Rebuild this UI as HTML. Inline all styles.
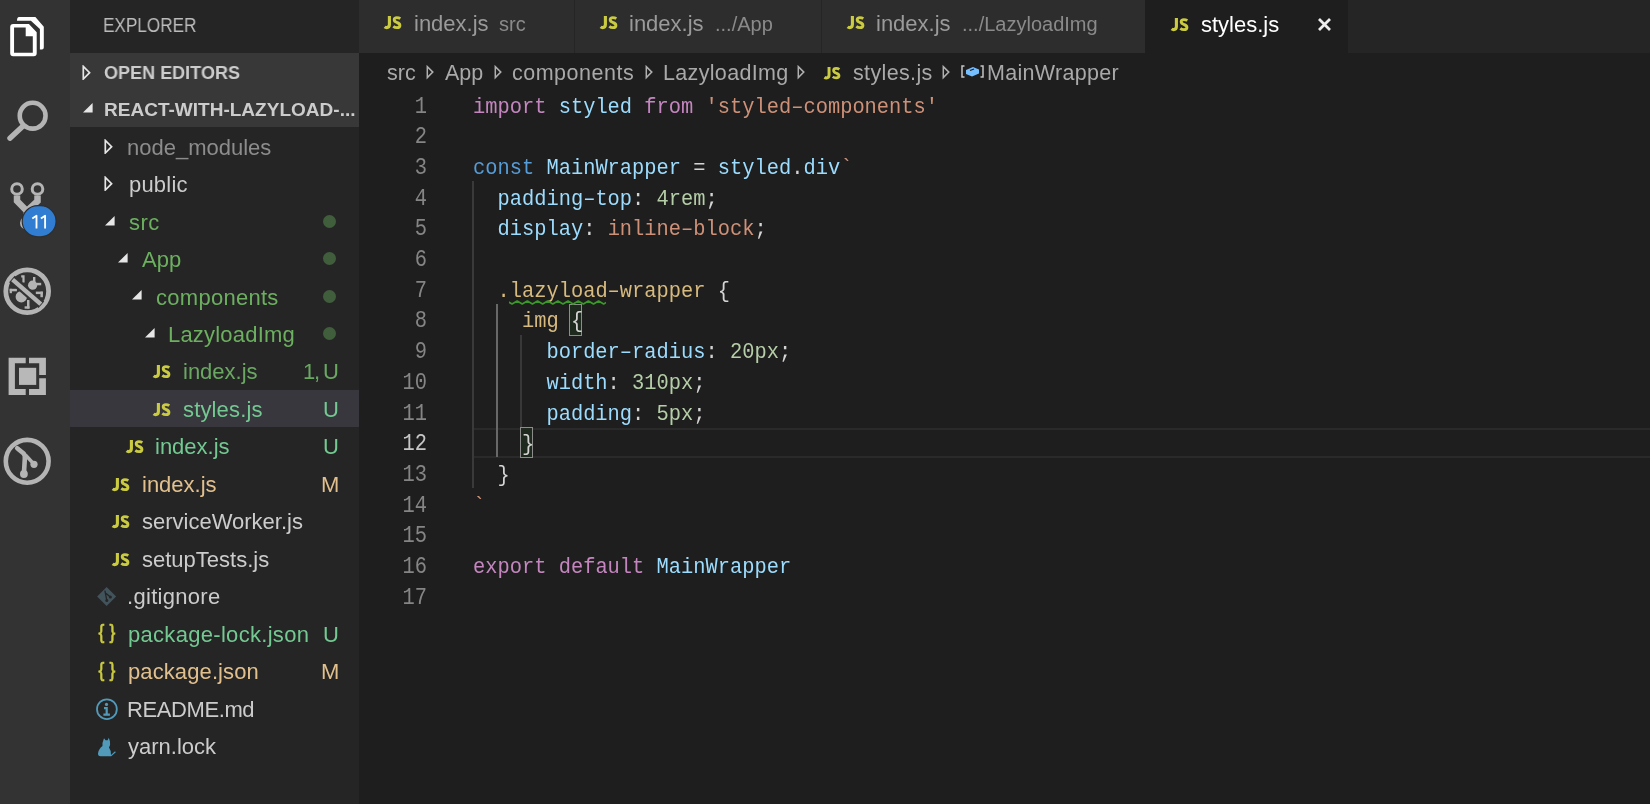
<!DOCTYPE html>
<html><head><meta charset="utf-8"><style>
*{margin:0;padding:0;box-sizing:border-box}
html,body{width:1650px;height:804px;overflow:hidden;background:#1e1e1e;font-family:"Liberation Sans",sans-serif}
.abs{position:absolute}
.t,.code,.ln,.js{will-change:transform}
.t{position:absolute;white-space:pre;line-height:1}
.lbl{font-size:22px;line-height:37.4px;height:37.4px}
.js{position:absolute;font-weight:bold;color:#cbcb41;white-space:pre;line-height:1}
.code{position:absolute;font-family:"Liberation Mono",monospace;font-size:20.4px;white-space:pre;line-height:30.6px;height:30.6px;color:#d4d4d4;transform:translateY(2.6px) scaleY(1.06);transform-origin:0 19.7px}
.ln{position:absolute;width:80px;text-align:right;font-family:"Liberation Mono",monospace;font-size:20.4px;line-height:30.6px;transform:translateY(2.6px) scaleY(1.13);transform-origin:0 19.7px}
.kw{color:#c586c0}.st{color:#9cdcfe}.str{color:#ce9178}.cst{color:#569cd6}.num{color:#b5cea8}.sel{color:#d7ba7d}
</style></head><body>
<svg width="0" height="0" style="position:absolute"><defs><g id="jsg" fill="none" stroke="#cbcb41" stroke-width="2.9"><path stroke-width="3.1" d="M5.4 0 L5.4 8.6 Q5.4 11.6 2.6 11.6 Q1.5 11.6 0.6 10.9"/><path d="M16.3 2.7 Q14.8 1.6 12.9 1.6 Q10.2 1.6 10.2 3.8 Q10.2 5.6 12.9 6.5 Q15.9 7.4 15.9 9.4 Q15.9 11.6 12.9 11.6 Q10.8 11.6 9.3 10.4"/></g></defs></svg>
<div class="abs" style="left:0;top:0;width:70px;height:804px;background:#333333"></div>
<div class="abs" style="left:70px;top:0;width:289px;height:804px;background:#252526"></div>
<div class="abs" style="left:359px;top:0;width:1291px;height:53px;background:#252526"></div>
<div class="abs" style="left:70px;top:53px;width:289px;height:74.4px;background:#383838"></div>
<div class="abs" style="left:70px;top:389.76px;width:289px;height:37.48px;background:#37373d"></div>
<svg class="abs" style="left:0;top:0" width="70" height="500" viewBox="0 0 70 500">
 <!-- explorer icon -->
 <path d="M17 17.1 L35.4 17.1 L43.8 26.8 L43.8 47.5 Q43.8 49.4 41.9 49.4 L39.9 49.4 L39.9 29.1 L30.9 20.7 L17 20.7 Q17 17.1 19 17.1 Z" fill="#ffffff"/>
 <path d="M10.2 26.9 Q10.2 23.9 13.2 23.9 L28.9 23.9 L36.7 32.3 L36.7 53.2 Q36.7 56.2 33.7 56.2 L13.2 56.2 Q10.2 56.2 10.2 53.2 Z" fill="#333333" stroke="#333333" stroke-width="3"/>
 <path fill-rule="evenodd" d="M10.2 26.9 Q10.2 23.9 13.2 23.9 L28.9 23.9 L36.7 32.3 L36.7 53.2 Q36.7 56.2 33.7 56.2 L13.2 56.2 Q10.2 56.2 10.2 53.2 Z M14.05 27.5 L25.7 27.5 L25.7 36.2 L32.8 36.2 L32.8 52.7 L14.05 52.7 Z" fill="#ffffff"/>
 <!-- search -->
 <g fill="none" stroke="#b4b4b4" stroke-width="4.6" stroke-linecap="round">
  <circle cx="32.65" cy="115.7" r="12.9"/>
  <path d="M9.9 138.3 L22.8 126.2" stroke-width="5.3"/>
 </g>
 <!-- scm -->
 <g fill="none" stroke="#b4b4b4">
  <circle cx="17" cy="189" r="5.3" stroke-width="3"/>
  <circle cx="37.5" cy="189" r="5.3" stroke-width="3"/>
  <circle cx="26.8" cy="223" r="5.3" stroke-width="3"/>
  <path d="M17 195.5 L17 201 L26.8 211 L37.5 201 L37.5 195.5 M26.8 211 L26.8 218" stroke-width="6.5" stroke-linejoin="miter"/>
 </g>
 <rect x="22.2" y="205.7" width="33.9" height="31.1" rx="15.55" fill="#307dd1" stroke="#2e2e2e" stroke-width="1.2"/>
 <path d="M32.3 218.6 L36.5 215.7 L36.5 228.5 M40.9 218.6 L45.1 215.7 L45.1 228.5" fill="none" stroke="#ffffff" stroke-width="1.85" stroke-linejoin="round"/>
 <!-- debug -->
 <g fill="#b4b4b4">
  <circle cx="27.2" cy="291.2" r="21.4" fill="none" stroke="#b4b4b4" stroke-width="4.8"/>
  <circle cx="32.6" cy="285.2" r="4.6"/>
  <path d="M21.2 275.2 L24.6 275.2 L24.6 282.5 L22.4 282.5 L22.4 277.4 L21.2 277.4 Z"/>
  <rect x="33" y="277" width="2.4" height="5"/>
  <rect x="35" y="282.8" width="6.2" height="2.5"/>
  <rect x="35.8" y="291.6" width="7" height="2.5"/>
  <rect x="40.4" y="291.6" width="2.5" height="5.6"/>
  <circle cx="21.3" cy="296.8" r="5.7"/>
  <rect x="9.7" y="288.8" width="7.2" height="2.5"/>
  <rect x="9.7" y="288.8" width="2.2" height="4.4"/>
  <rect x="27" y="300" width="2.5" height="8.5"/>
  <rect x="24.6" y="306.3" width="4.9" height="2.4"/>
  <path d="M11.9 279 L41.4 304.8" stroke="#333333" stroke-width="8.5"/>
  <path d="M12.6 279.6 L40.8 304.2" stroke="#b4b4b4" stroke-width="4.4"/>
 </g>
 <!-- extensions -->
 <g fill="#b8b8b8">
  <path d="M8.6 357.7 L25.7 357.7 L25.7 363.3 L14.9 363.3 L14.9 389 L25.7 389 L25.7 395 L8.6 395 Z"/>
  <path d="M29 357.7 L45.9 357.7 L45.9 375 L39.2 375 L39.2 363.3 L29 363.3 Z"/>
  <path d="M39.2 378.2 L45.9 378.2 L45.9 395 L29 395 L29 389 L39.2 389 Z"/>
  <rect x="19" y="367.8" width="17.2" height="17.1"/>
 </g>
 <!-- git graph -->
 <g fill="none" stroke="#b4b4b4">
  <circle cx="27.2" cy="461.3" r="21.4" stroke-width="4.6"/>
  <path d="M17.2 448.3 L23.3 453.2 Q25.3 455.2 24.8 459 L23.9 474" stroke-width="4.6" stroke-linecap="round"/>
  <path d="M25.5 455 L33.8 464" stroke-width="3.4"/>
 </g>
 <circle cx="23.9" cy="474" r="3.9" fill="#b4b4b4"/>
 <circle cx="34" cy="464.3" r="3.6" fill="#b4b4b4"/>
</svg>

<div class="t " style="left:103.39999999999999px;top:15.5px;font-size:19.3px;color:#bbbbbb;transform:scaleX(0.89);transform-origin:0 0">EXPLORER</div>
<svg class="abs" style="left:82px;top:65.3px" width="10" height="15" viewBox="0 0 10 15"><path d="M1.3 1.4 L1.3 14.0 L7.6 7.7 Z" fill="none" stroke="#e6e6e6" stroke-width="1.7"/></svg>
<div class="t " style="left:104.0px;top:63.5px;font-size:18.7px;font-weight:bold;color:#cccccc;transform:scaleX(0.965);transform-origin:0 0">OPEN EDITORS</div>
<svg class="abs" style="left:82.5px;top:103.2px" width="10" height="10" viewBox="0 0 10 10"><path d="M0 9.6 L9.6 9.6 L9.6 0 Z" fill="#e6e6e6"/></svg>
<div class="t " style="left:104.0px;top:100.6px;font-size:18.7px;font-weight:bold;color:#cccccc;transform:scaleX(1.018);transform-origin:0 0">REACT-WITH-LAZYLOAD-...</div>
<svg class="abs" style="left:104.35px;top:138.64000000000001px" width="10" height="15" viewBox="0 0 10 15"><path d="M1.3 1.4 L1.3 14.0 L7.6 7.7 Z" fill="none" stroke="#e6e6e6" stroke-width="1.7"/></svg>
<div class="t lbl" style="left:126.69999999999999px;top:128.6px;color:#8c8c8c;letter-spacing:0px">node_modules</div>
<svg class="abs" style="left:104.35px;top:176.12px" width="10" height="15" viewBox="0 0 10 15"><path d="M1.3 1.4 L1.3 14.0 L7.6 7.7 Z" fill="none" stroke="#e6e6e6" stroke-width="1.7"/></svg>
<div class="t lbl" style="left:128.6px;top:166.07999999999998px;color:#cccccc;letter-spacing:0.2px">public</div>
<svg class="abs" style="left:104.5px;top:215.50000000000003px" width="10" height="10" viewBox="0 0 10 10"><path d="M0 9.6 L9.6 9.6 L9.6 0 Z" fill="#e6e6e6"/></svg>
<div class="t lbl" style="left:128.6px;top:203.56px;color:#6cb05f;letter-spacing:0.4px">src</div>
<div class="abs" style="left:323px;top:214.60000000000002px;width:13px;height:13px;border-radius:50%;background:#405e3c"></div>
<svg class="abs" style="left:118.2px;top:252.98px" width="10" height="10" viewBox="0 0 10 10"><path d="M0 9.6 L9.6 9.6 L9.6 0 Z" fill="#e6e6e6"/></svg>
<div class="t lbl" style="left:142.2px;top:241.04px;color:#6cb05f;letter-spacing:0px">App</div>
<div class="abs" style="left:323px;top:252.07999999999998px;width:13px;height:13px;border-radius:50%;background:#405e3c"></div>
<svg class="abs" style="left:131.8px;top:290.46px" width="10" height="10" viewBox="0 0 10 10"><path d="M0 9.6 L9.6 9.6 L9.6 0 Z" fill="#e6e6e6"/></svg>
<div class="t lbl" style="left:155.8px;top:278.52px;color:#6cb05f;letter-spacing:0.28px">components</div>
<div class="abs" style="left:323px;top:289.56px;width:13px;height:13px;border-radius:50%;background:#405e3c"></div>
<svg class="abs" style="left:145.4px;top:327.93999999999994px" width="10" height="10" viewBox="0 0 10 10"><path d="M0 9.6 L9.6 9.6 L9.6 0 Z" fill="#e6e6e6"/></svg>
<div class="t lbl" style="left:168.20000000000002px;top:315.99999999999994px;color:#6cb05f;letter-spacing:0.2px">LazyloadImg</div>
<div class="abs" style="left:323px;top:327.03999999999996px;width:13px;height:13px;border-radius:50%;background:#405e3c"></div>
<svg class="abs" style="left:150.8px;top:363.11999999999995px" width="21.50" height="17.20" viewBox="-2 -2 21.5 17.2"><use href="#jsg"/></svg>
<div class="t lbl" style="left:182.5px;top:353.47999999999996px;color:#6aa862;letter-spacing:0px">index.js</div>
<div class="t lbl" style="right:1310.8px;top:353.47999999999996px;color:#6aa862;letter-spacing:0px;text-align:right">U</div>
<div class="t lbl" style="left:303.4px;top:353.47999999999996px;color:#6aa862;letter-spacing:0px">1</div>
<div class="t lbl" style="left:314.0px;top:353.47999999999996px;color:#6aa862;letter-spacing:0px">,</div>
<svg class="abs" style="left:150.8px;top:400.59999999999997px" width="21.50" height="17.20" viewBox="-2 -2 21.5 17.2"><use href="#jsg"/></svg>
<div class="t lbl" style="left:182.5px;top:390.96px;color:#73c991;letter-spacing:0.15px">styles.js</div>
<div class="t lbl" style="right:1310.8px;top:390.96px;color:#73c991;letter-spacing:0px;text-align:right">U</div>
<svg class="abs" style="left:123.8px;top:438.08px" width="21.50" height="17.20" viewBox="-2 -2 21.5 17.2"><use href="#jsg"/></svg>
<div class="t lbl" style="left:155.10000000000002px;top:428.44px;color:#73c991;letter-spacing:0px">index.js</div>
<div class="t lbl" style="right:1310.8px;top:428.44px;color:#73c991;letter-spacing:0px;text-align:right">U</div>
<svg class="abs" style="left:110.3px;top:475.56px" width="21.50" height="17.20" viewBox="-2 -2 21.5 17.2"><use href="#jsg"/></svg>
<div class="t lbl" style="left:141.7px;top:465.92px;color:#e2c08d;letter-spacing:0px">index.js</div>
<div class="t lbl" style="right:1310.8px;top:465.92px;color:#e2c08d;letter-spacing:0px;text-align:right">M</div>
<svg class="abs" style="left:110.3px;top:513.04px" width="21.50" height="17.20" viewBox="-2 -2 21.5 17.2"><use href="#jsg"/></svg>
<div class="t lbl" style="left:142.2px;top:503.3999999999999px;color:#cccccc;letter-spacing:0px">serviceWorker.js</div>
<svg class="abs" style="left:110.3px;top:550.52px" width="21.50" height="17.20" viewBox="-2 -2 21.5 17.2"><use href="#jsg"/></svg>
<div class="t lbl" style="left:142.2px;top:540.88px;color:#cccccc;letter-spacing:0px">setupTests.js</div>
<div class="t lbl" style="left:127.0px;top:578.36px;color:#cccccc;letter-spacing:0.3px">.gitignore</div>
<div class="t lbl" style="left:128.4px;top:615.84px;color:#73c991;letter-spacing:0.3px">package-lock.json</div>
<div class="t lbl" style="right:1310.8px;top:615.84px;color:#73c991;letter-spacing:0px;text-align:right">U</div>
<div class="t lbl" style="left:128.4px;top:653.3199999999999px;color:#e2c08d;letter-spacing:0.1px">package.json</div>
<div class="t lbl" style="right:1310.8px;top:653.3199999999999px;color:#e2c08d;letter-spacing:0px;text-align:right">M</div>
<div class="t lbl" style="left:127.2px;top:690.8px;color:#cccccc;letter-spacing:-0.4px">README.md</div>
<div class="t lbl" style="left:128.4px;top:728.28px;color:#cccccc;letter-spacing:0px">yarn.lock</div>
<svg class="abs" style="left:90px;top:580px" width="40" height="190" viewBox="90 580 40 190">
 <path d="M106.6 587.1 L116.1 596.6 L106.6 606.1 L97.1 596.6 Z" fill="#41535b"/>
 <path d="M104.9 590.6 L106.8 600.4 M105.9 593.2 L110.3 597" stroke="#252526" stroke-width="1.3" fill="none"/>
 <circle cx="106.8" cy="600.5" r="1.5" fill="#252526"/>
 <circle cx="110.4" cy="597" r="1.5" fill="#252526"/>
 <text x="98.2" y="639.5" font-family="Liberation Sans" font-size="20.5" fill="#cbcb41" stroke="#cbcb41" stroke-width="0.7" transform="translate(98.2 0) scale(0.85 1) translate(-97.8 0)">{</text>
 <text x="109.6" y="639.5" font-family="Liberation Sans" font-size="20.5" fill="#cbcb41" stroke="#cbcb41" stroke-width="0.7" transform="translate(109.6 0) scale(0.85 1) translate(-109.6 0)">}</text>
 <text x="98.2" y="676.9" font-family="Liberation Sans" font-size="20.5" fill="#cbcb41" stroke="#cbcb41" stroke-width="0.7" transform="translate(98.2 0) scale(0.85 1) translate(-97.8 0)">{</text>
 <text x="109.6" y="676.9" font-family="Liberation Sans" font-size="20.5" fill="#cbcb41" stroke="#cbcb41" stroke-width="0.7" transform="translate(109.6 0) scale(0.85 1) translate(-109.6 0)">}</text>
 <circle cx="106.9" cy="709.2" r="9.9" fill="none" stroke="#519aba" stroke-width="1.8"/>
 <circle cx="106.5" cy="704.4" r="1.6" fill="#519aba"/>
 <path d="M104 708.2 L106.7 708.2 L106.7 714.6 M103.4 714.6 L109.9 714.6" stroke="#519aba" stroke-width="2.2" fill="none"/>
 <path d="M104 738.3 L105.6 740.3 L107.6 740.2 L108.8 737.7 L110 741.5 Q110.6 745 109 747.5 Q111.5 751 111 755 L115 751.2 L115.8 752.2 L111.2 756.3 L100.5 756.3 Q97.8 756 98 753.5 Q98.5 749 102.5 746 Q102 743 104 738.3 Z" fill="#519aba"/>
</svg>

<div class="abs" style="left:359px;top:0;width:215px;height:53px;background:#2d2d2d"></div>
<div class="abs" style="left:575px;top:0;width:246px;height:53px;background:#2d2d2d"></div>
<div class="abs" style="left:822px;top:0;width:323px;height:53px;background:#2d2d2d"></div>
<div class="abs" style="left:1145px;top:0;width:203px;height:53px;background:#1e1e1e"></div>
<div class="abs" style="left:359px;top:53px;width:1291px;height:751px;background:#1e1e1e"></div>
<svg class="abs" style="left:382.4px;top:14px" width="21.50" height="17.20" viewBox="-2 -2 21.5 17.2"><use href="#jsg"/></svg>
<svg class="abs" style="left:598.3px;top:13.8px" width="21.50" height="17.20" viewBox="-2 -2 21.5 17.2"><use href="#jsg"/></svg>
<svg class="abs" style="left:844.5px;top:13.8px" width="21.50" height="17.20" viewBox="-2 -2 21.5 17.2"><use href="#jsg"/></svg>
<svg class="abs" style="left:1168.9px;top:16px" width="21.50" height="17.20" viewBox="-2 -2 21.5 17.2"><use href="#jsg"/></svg>
<div class="t" style="left:413.7px;top:30.599999999999998px;font-size:22px;color:#9a9a9a;letter-spacing:0px;transform:translateY(-19.91px) scaleX(1);transform-origin:0 0;line-height:normal">index.js</div>
<div class="t" style="left:498.5px;top:31.2px;font-size:20px;color:#8a8a8a;letter-spacing:0px;transform:translateY(-18.10px) scaleX(1);transform-origin:0 0;line-height:normal">src</div>
<div class="t" style="left:629.3000000000001px;top:30.599999999999998px;font-size:22px;color:#9a9a9a;letter-spacing:0px;transform:translateY(-19.91px) scaleX(1);transform-origin:0 0;line-height:normal">index.js</div>
<div class="t" style="left:715.2px;top:31.2px;font-size:20px;color:#8a8a8a;letter-spacing:0px;transform:translateY(-18.10px) scaleX(1);transform-origin:0 0;line-height:normal">.../App</div>
<div class="t" style="left:876.0px;top:30.599999999999998px;font-size:22px;color:#9a9a9a;letter-spacing:0px;transform:translateY(-19.91px) scaleX(1);transform-origin:0 0;line-height:normal">index.js</div>
<div class="t" style="left:961.9000000000001px;top:31.2px;font-size:20px;color:#8a8a8a;letter-spacing:0px;transform:translateY(-18.10px) scaleX(1);transform-origin:0 0;line-height:normal">.../LazyloadImg</div>
<div class="t" style="left:1200.6000000000001px;top:31.900000000000002px;font-size:22px;color:#ffffff;letter-spacing:0px;transform:translateY(-19.91px) scaleX(1);transform-origin:0 0;line-height:normal">styles.js</div>
<svg class="abs" style="left:1316px;top:16px" width="17" height="17" viewBox="0 0 17 17"><path d="M3 3 L14 14 M14 3 L3 14" stroke="#eeeeee" stroke-width="2.8"/></svg>
<div class="t" style="left:386.5px;top:79.8px;font-size:21.5px;color:#a9a9a9;letter-spacing:0px;transform:translateY(-19.46px) scaleX(1);transform-origin:0 0;line-height:normal">src</div>
<svg class="abs" style="left:426.3px;top:65px" width="10" height="15" viewBox="0 0 10 15"><path d="M1.3 1.6 L1.3 12.6 L6.8 7.1 Z" fill="none" stroke="#b0b0b0" stroke-width="1.5"/></svg>
<div class="t" style="left:445.0px;top:79.8px;font-size:21.5px;color:#a9a9a9;letter-spacing:0px;transform:translateY(-19.46px) scaleX(1);transform-origin:0 0;line-height:normal">App</div>
<svg class="abs" style="left:493.5px;top:65px" width="10" height="15" viewBox="0 0 10 15"><path d="M1.3 1.6 L1.3 12.6 L6.8 7.1 Z" fill="none" stroke="#b0b0b0" stroke-width="1.5"/></svg>
<div class="t" style="left:511.90000000000003px;top:79.8px;font-size:21.5px;color:#a9a9a9;letter-spacing:0.5px;transform:translateY(-19.46px) scaleX(1);transform-origin:0 0;line-height:normal">components</div>
<svg class="abs" style="left:644.5px;top:65px" width="10" height="15" viewBox="0 0 10 15"><path d="M1.3 1.6 L1.3 12.6 L6.8 7.1 Z" fill="none" stroke="#b0b0b0" stroke-width="1.5"/></svg>
<div class="t" style="left:662.8000000000001px;top:79.8px;font-size:21.5px;color:#a9a9a9;letter-spacing:0.33px;transform:translateY(-19.46px) scaleX(1);transform-origin:0 0;line-height:normal">LazyloadImg</div>
<svg class="abs" style="left:797.2px;top:65px" width="10" height="15" viewBox="0 0 10 15"><path d="M1.3 1.6 L1.3 12.6 L6.8 7.1 Z" fill="none" stroke="#b0b0b0" stroke-width="1.5"/></svg>
<svg class="abs" style="left:821.6px;top:64.8px" width="20.43" height="16.34" viewBox="-2 -2 21.5 17.2"><use href="#jsg"/></svg>
<div class="t" style="left:852.8000000000001px;top:79.8px;font-size:21.5px;color:#a9a9a9;letter-spacing:0.35px;transform:translateY(-19.46px) scaleX(1);transform-origin:0 0;line-height:normal">styles.js</div>
<svg class="abs" style="left:941.7px;top:65px" width="10" height="15" viewBox="0 0 10 15"><path d="M1.3 1.6 L1.3 12.6 L6.8 7.1 Z" fill="none" stroke="#b0b0b0" stroke-width="1.5"/></svg>
<svg class="abs" style="left:961px;top:65px" width="23" height="13" viewBox="0 0 23 13"><path d="M3.5 1 L1 1 L1 12 L3.5 12 M19.5 1 L22 1 L22 12 L19.5 12" fill="none" stroke="#c5c5c5" stroke-width="1.5"/><path d="M5 5 L12 2 L18 4.5 L18 8.5 L11 11.5 L5 9 Z" fill="#75beff"/><path d="M9 5.5 L13 4" stroke="#1e1e1e" stroke-width="1.3"/></svg>
<div class="t" style="left:987.4000000000001px;top:80.1px;font-size:21.5px;color:#a9a9a9;letter-spacing:0.3px;transform:translateY(-19.46px) scaleX(1);transform-origin:0 0;line-height:normal">MainWrapper</div>
<div class="abs" style="left:472.5px;top:428px;width:1177.5px;height:30.2px;border-top:2.6px solid #2a2a2a;border-bottom:2.6px solid #2a2a2a"></div>
<div class="abs" style="left:471.5px;top:181.24px;width:2px;height:306.8px;background:#3a3a3a"></div>
<div class="abs" style="left:495.98px;top:303.96px;width:2px;height:153.4px;background:#686868"></div>
<div class="abs" style="left:520.46px;top:334.64px;width:2px;height:92.03999999999999px;background:#383838"></div>
<div class="abs" style="left:568.92px;top:304.35999999999996px;width:12.74px;height:31.28px;border:1.8px solid #8c8c8c;background:#1d2a1d"></div>
<div class="abs" style="left:519.96px;top:427.08px;width:12.74px;height:31.28px;border:1.8px solid #8c8c8c;background:#1d2a1d"></div>
<div class="ln" style="left:346.5px;top:89.7px;color:#858585">1</div>
<div class="code" style="left:472.5px;top:89.7px"><span class="kw">import</span> <span class="st">styled</span> <span class="kw">from</span> <span class="str">'styled&#8211;components'</span></div>
<div class="ln" style="left:346.5px;top:120.38px;color:#858585">2</div>
<div class="ln" style="left:346.5px;top:151.06px;color:#858585">3</div>
<div class="code" style="left:472.5px;top:151.06px"><span class="cst">const</span> <span class="st">MainWrapper</span> = <span class="st">styled</span>.<span class="st">div</span><span class="str">`</span></div>
<div class="ln" style="left:346.5px;top:181.74px;color:#858585">4</div>
<div class="code" style="left:472.5px;top:181.74px">  <span class="st">padding&#8211;top</span>: <span class="num">4rem</span>;</div>
<div class="ln" style="left:346.5px;top:212.42000000000002px;color:#858585">5</div>
<div class="code" style="left:472.5px;top:212.42000000000002px">  <span class="st">display</span>: <span class="str">inline&#8211;block</span>;</div>
<div class="ln" style="left:346.5px;top:243.10000000000002px;color:#858585">6</div>
<div class="ln" style="left:346.5px;top:273.78px;color:#858585">7</div>
<div class="code" style="left:472.5px;top:273.78px">  <span class="sel">.lazyload&#8211;wrapper</span> {</div>
<div class="ln" style="left:346.5px;top:304.46px;color:#858585">8</div>
<div class="code" style="left:472.5px;top:304.46px">    <span class="sel">img</span> {</div>
<div class="ln" style="left:346.5px;top:335.14px;color:#858585">9</div>
<div class="code" style="left:472.5px;top:335.14px">      <span class="st">border&#8211;radius</span>: <span class="num">20px</span>;</div>
<div class="ln" style="left:346.5px;top:365.82px;color:#858585">10</div>
<div class="code" style="left:472.5px;top:365.82px">      <span class="st">width</span>: <span class="num">310px</span>;</div>
<div class="ln" style="left:346.5px;top:396.5px;color:#858585">11</div>
<div class="code" style="left:472.5px;top:396.5px">      <span class="st">padding</span>: <span class="num">5px</span>;</div>
<div class="ln" style="left:346.5px;top:427.18px;color:#c6c6c6">12</div>
<div class="code" style="left:472.5px;top:427.18px">    }</div>
<div class="ln" style="left:346.5px;top:457.85999999999996px;color:#858585">13</div>
<div class="code" style="left:472.5px;top:457.85999999999996px">  }</div>
<div class="ln" style="left:346.5px;top:488.53999999999996px;color:#858585">14</div>
<div class="code" style="left:472.5px;top:488.53999999999996px"><span class="str">`</span></div>
<div class="ln" style="left:346.5px;top:519.22px;color:#858585">15</div>
<div class="ln" style="left:346.5px;top:549.9px;color:#858585">16</div>
<div class="code" style="left:472.5px;top:549.9px"><span class="kw">export</span> <span class="kw">default</span> <span class="st">MainWrapper</span></div>
<div class="ln" style="left:346.5px;top:580.58px;color:#858585">17</div>
<svg class="abs" style="left:509.2px;top:296px" width="96.80" height="11" viewBox="0 0 96.80 11"><path d="M-12.20 5.00 L-7.11 8.00 L-2.02 5.00 L3.07 8.00 L8.16 5.00 L13.25 8.00 L18.34 5.00 L23.43 8.00 L28.52 5.00 L33.61 8.00 L38.70 5.00 L43.79 8.00 L48.88 5.00 L53.97 8.00 L59.06 5.00 L64.15 8.00 L69.24 5.00 L74.33 8.00 L79.42 5.00 L84.51 8.00 L89.60 5.00 L94.69 8.00 L99.78 5.00 L104.87 8.00" fill="none" stroke="#3a9a27" stroke-width="1.7" stroke-linejoin="round"/></svg>
</body></html>
